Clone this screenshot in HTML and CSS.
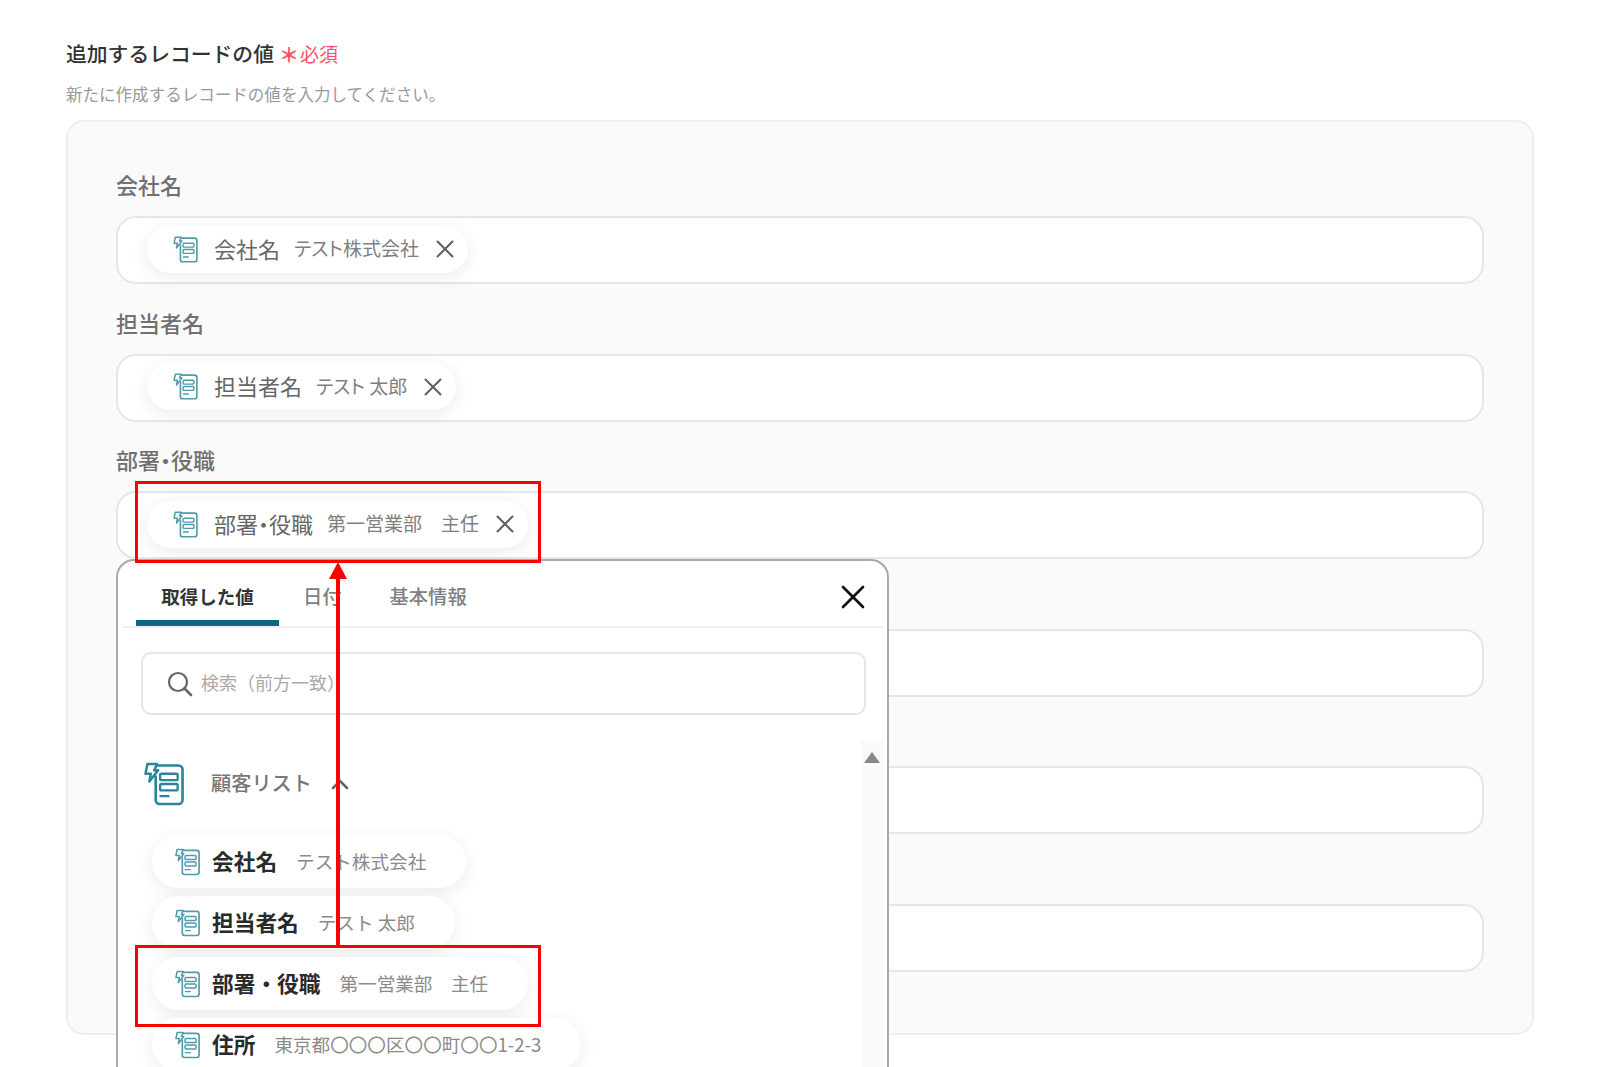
FILE: index.html
```html
<!DOCTYPE html>
<html lang="ja">
<head>
<meta charset="utf-8">
<title>追加するレコードの値</title>
<link rel="stylesheet" href="styles.css">
</head>
<body>
<svg class="defs" aria-hidden="true">
  <symbol id="sheet" viewBox="4 12 41 45">
    <path d="M18 15.5H39.5a4 4 0 0 1 4 4V51a4 4 0 0 1-4 4H20a4 4 0 0 1-4-4V27" fill="none" stroke="currentColor" stroke-width="2.7" stroke-linecap="round"/>
    <path d="M7.5 14H17.5L14.5 20.5H18.5L9.5 32L11 24H5.5Z" fill="#fff" stroke="currentColor" stroke-width="2.5" stroke-linejoin="round"/>
    <rect x="20.5" y="24" width="18" height="6.5" rx="1.5" fill="none" stroke="currentColor" stroke-width="2.4"/>
    <rect x="20.5" y="34.5" width="18" height="6.5" rx="1.5" fill="none" stroke="currentColor" stroke-width="2.4"/>
    <path d="M21 47H29" fill="none" stroke="currentColor" stroke-width="2.4" stroke-linecap="round"/>
  </symbol>
  <symbol id="cross" viewBox="0 0 18 18">
    <path d="M1.5 1.5L16.5 16.5M16.5 1.5L1.5 16.5" fill="none" stroke="currentColor" stroke-width="2" stroke-linecap="round"/>
  </symbol>
</svg>

<div class="page">
  <div class="title-row">
    <h1 class="title">追加するレコードの値</h1>
    <span class="required"><span class="star">＊</span>必須</span>
  </div>
  <p class="subtitle">新たに作成するレコードの値を入力してください。</p>

  <section class="panel">
    <div class="group">
      <div class="label">会社名</div>
      <div class="field">
        <div class="chip">
          <svg class="chip-icon"><use href="#sheet"/></svg>
          <span class="chip-name">会社名</span>
          <span class="chip-value">テスト株式会社</span>
          <svg class="chip-x"><use href="#cross"/></svg>
        </div>
      </div>
    </div>
    <div class="group">
      <div class="label">担当者名</div>
      <div class="field">
        <div class="chip">
          <svg class="chip-icon"><use href="#sheet"/></svg>
          <span class="chip-name">担当者名</span>
          <span class="chip-value">テスト 太郎</span>
          <svg class="chip-x"><use href="#cross"/></svg>
        </div>
      </div>
    </div>
    <div class="group">
      <div class="label narrow-dot">部署・役職</div>
      <div class="field">
        <div class="chip">
          <svg class="chip-icon"><use href="#sheet"/></svg>
          <span class="chip-name narrow-dot">部署・役職</span>
          <span class="chip-value">第一営業部　主任</span>
          <svg class="chip-x"><use href="#cross"/></svg>
        </div>
      </div>
    </div>
    <div class="group"><div class="label"></div><div class="field"></div></div>
    <div class="group"><div class="label"></div><div class="field"></div></div>
    <div class="group"><div class="label"></div><div class="field"></div></div>
  </section>

  <div class="popup">
    <div class="tabs">
      <div class="tab active">取得した値</div>
      <div class="tab">日付</div>
      <div class="tab">基本情報</div>
      <svg class="popup-close"><use href="#cross"/></svg>
    </div>
    <div class="search">
      <svg class="search-icon" viewBox="0 0 26 26"><circle cx="11" cy="11" r="9" fill="none" stroke="currentColor" stroke-width="2.2"/><path d="M17.5 17.5L24 24" fill="none" stroke="currentColor" stroke-width="2.6" stroke-linecap="round"/></svg>
      <span class="search-text">検索（前方一致）</span>
    </div>
    <div class="source">
      <svg class="source-icon"><use href="#sheet"/></svg>
      <span class="source-name">顧客リスト</span>
      <svg class="source-chevron" viewBox="0 0 18 12"><path d="M2 10L9 3L16 10" fill="none" stroke="currentColor" stroke-width="2.6" stroke-linecap="round" stroke-linejoin="round"/></svg>
    </div>
    <div class="list">
      <div class="item">
        <svg class="item-icon"><use href="#sheet"/></svg>
        <span class="item-name">会社名</span>
        <span class="item-value">テスト株式会社</span>
      </div>
      <div class="item">
        <svg class="item-icon"><use href="#sheet"/></svg>
        <span class="item-name">担当者名</span>
        <span class="item-value">テスト 太郎</span>
      </div>
      <div class="item">
        <svg class="item-icon"><use href="#sheet"/></svg>
        <span class="item-name">部署・役職</span>
        <span class="item-value">第一営業部　主任</span>
      </div>
      <div class="item">
        <svg class="item-icon"><use href="#sheet"/></svg>
        <span class="item-name">住所</span>
        <span class="item-value">東京都〇〇〇区〇〇町〇〇1-2-3</span>
      </div>
    </div>
    <div class="scrollbar"><div class="scroll-up"></div></div>
  </div>

  <div class="mark mark-top"></div>
  <div class="mark mark-bottom"></div>
  <svg class="arrow" viewBox="0 0 18 384"><path d="M9 0L18 17H11V384H7V17H0Z" fill="#f00"/></svg>
</div>
</body>
</html>
```
FILE: styles.css
```css
* { box-sizing: border-box; }
html, body { margin: 0; padding: 0; background: #fff; }
body { font-family: "Noto Sans CJK JP", "Noto Sans", sans-serif; }
.defs { display: none; }

.page {
  position: relative;
  height: 1067px;
  overflow: hidden;
  padding: 38px 66px 0;
}

.title-row { display: flex; align-items: center; height: 30px; }
.title { margin: 0; font-size: 20.8px; font-weight: 500; line-height: 30px; color: #333; }
.required { display: flex; align-items: center; margin-left: 5px; font-size: 19px; color: #ff4d67; }
.star { width: 21px; margin-top: 3px; font-size: 20px; font-weight: 700; }
.subtitle { margin: 14px 0 14px; font-size: 16.55px; line-height: 24px; color: #999; }

.panel {
  display: flex;
  flex-direction: column;
  gap: 24.5px;
  height: 915px;
  padding: 49px 48px 0;
  background: #fafafa;
  border: 2px solid #eceef1;
  border-radius: 18px;
}
.label { height: 30px; margin-bottom: 15px; padding-bottom: 2px; font-size: 22px; font-weight: 500; line-height: 26px; color: #707070; }
.narrow-dot { font-feature-settings: "palt"; }
.field {
  display: flex;
  align-items: center;
  height: 68px;
  padding: 0 0 2px 29px;
  background: #fff;
  border: 2px solid #e3e7ec;
  border-radius: 20px;
}

.chip {
  display: flex;
  align-items: center;
  height: 47px;
  padding: 0 14px 0 26px;
  background: #fff;
  border-radius: 24px;
  box-shadow: 0 4px 18px rgba(0, 0, 0, .08);
}
.chip-icon { width: 25px; height: 27px; color: #4f9bac; }
.chip-name { margin-left: 16px; padding-bottom: 3px; font-size: 22px; color: #666; white-space: nowrap; }
.chip-value { margin-left: 14px; padding-bottom: 3px; font-size: 19px; font-feature-settings: "palt"; color: #808080; white-space: nowrap; }
.chip-x { width: 18px; height: 18px; margin-left: 17px; color: #5f5f5f; }

.popup {
  position: absolute;
  left: 116px;
  top: 559px;
  width: 773px;
  height: 640px;
  background: #fff;
  border: 2px solid #aaa;
  border-radius: 18px;
}
.tabs {
  position: relative;
  display: flex;
  height: 67px;
  margin: 0 4px;
  padding-left: 14px;
  border-bottom: 2px solid #f0f0f0;
}
.tab {
  display: flex;
  align-items: center;
  height: 65px;
  padding: 4px 24px 0;
  font-size: 19.3px;
  font-weight: 500;
  color: #808080;
}
.tab.active {
  justify-content: center;
  width: 143px;
  padding: 10px 0 0;
  font-size: 18.5px;
  font-weight: 700;
  color: #333;
  border-bottom: 6px solid #0b6a80;
  border-radius: 6px 6px 0 0;
}
.popup-close { position: absolute; right: 18px; top: 24px; width: 24px; height: 24px; color: #111; }

.search {
  display: flex;
  align-items: center;
  height: 63px;
  margin: 24px 21px 0 23px;
  padding-left: 24px;
  border: 2px solid #e5e5e5;
  border-radius: 10px;
}
.search-icon { width: 26px; height: 26px; color: #666; }
.search-text { margin-left: 8px; padding-bottom: 4px; font-size: 18px; color: #aaa; }

.source { display: flex; align-items: center; height: 44px; margin: 47px 0 0 26px; }
.source-icon { width: 40px; height: 44px; color: #2b8598; }
.source-name { margin-left: 27px; padding-bottom: 3px; font-size: 20.2px; font-weight: 500; color: #777; }
.source-chevron { width: 18px; height: 12px; margin-left: 19px; color: #666; }

.list { display: flex; flex-direction: column; align-items: flex-start; gap: 8px; margin: 29px 0 0 34px; }
.item {
  display: flex;
  align-items: center;
  height: 53px;
  padding: 0 40px 0 23px;
  background: #fff;
  border-radius: 27px;
  box-shadow: 0 4px 18px rgba(0, 0, 0, .08);
}
.item-icon { width: 25px; height: 28px; color: #4f9bac; }
.item-name { margin-left: 12px; padding-bottom: 3px; font-size: 21.7px; font-weight: 700; color: #2a2a2a; white-space: nowrap; }
.item-value { margin-left: 19px; padding-bottom: 3px; font-size: 18.6px; color: #8a8a8a; white-space: nowrap; }

.scrollbar { position: absolute; left: 743px; top: 180px; bottom: 0; width: 22px; background: #fafafa; }
.scroll-up { width: 0; height: 0; margin: 11px auto 0; border-left: 8px solid transparent; border-right: 8px solid transparent; border-bottom: 11px solid #888; }

.mark { position: absolute; left: 135px; width: 406px; border: 3px solid #f00; }
.mark-top { top: 481px; height: 82px; }
.mark-bottom { top: 945px; height: 82px; }
.arrow { position: absolute; left: 329px; top: 562px; width: 18px; height: 384px; }
```
